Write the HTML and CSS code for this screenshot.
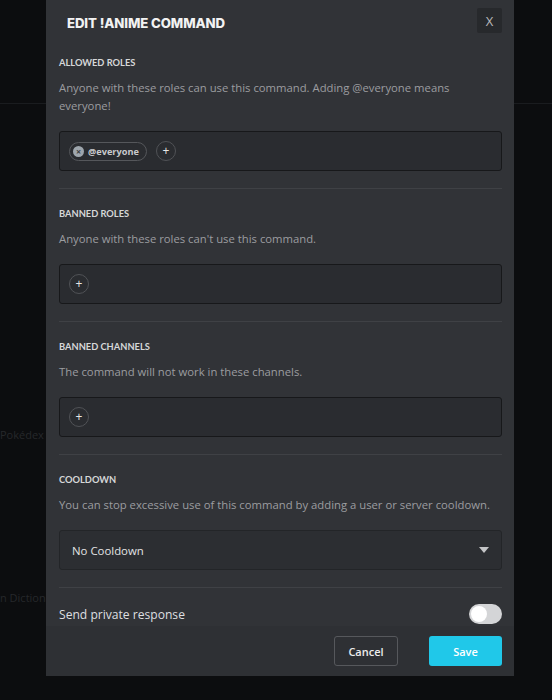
FILE: index.html
```html
<!DOCTYPE html>
<html lang="en">
<head>
<meta charset="utf-8">
<link rel="stylesheet" href="styles.css">
</head>
<body>
<div class="page">
  <div class="bg-line"></div>
  <div class="bg-text bg-text-1">Pokédex</div>
  <div class="bg-text bg-text-2">n Dictionary</div>

  <div class="modal">
    <div class="modal-header">
      <h1 class="modal-title">EDIT !ANIME COMMAND</h1>
      <button class="close-btn">X</button>
    </div>
    <div class="modal-body">
      <section class="section">
        <div class="label">ALLOWED ROLES</div>
        <p class="desc">Anyone with these roles can use this command. Adding @everyone means everyone!</p>
        <div class="field">
          <span class="chip"><span class="chip-x">×</span>@everyone</span>
          <span class="add">+</span>
        </div>
      </section>
      <section class="section">
        <div class="label">BANNED ROLES</div>
        <p class="desc">Anyone with these roles can't use this command.</p>
        <div class="field"><span class="add">+</span></div>
      </section>
      <section class="section">
        <div class="label">BANNED CHANNELS</div>
        <p class="desc">The command will not work in these channels.</p>
        <div class="field"><span class="add">+</span></div>
      </section>
      <section class="section">
        <div class="label">COOLDOWN</div>
        <p class="desc">You can stop excessive use of this command by adding a user or server cooldown.</p>
        <div class="select">
          <span>No Cooldown</span>
          <span class="caret"></span>
        </div>
      </section>
      <div class="toggle-row">
        <span>Send private response</span>
        <span class="toggle"><span class="knob"></span></span>
      </div>
    </div>
    <div class="modal-footer">
      <button class="btn btn-cancel">Cancel</button>
      <button class="btn btn-save">Save</button>
    </div>
  </div>
</div>
</body>
</html>
```

FILE: styles.css
```css
* { box-sizing: border-box; }
html, body { margin: 0; padding: 0; }
body {
  background: #0c0d0f;
  width: 552px;
  height: 700px;
  overflow: hidden;
  font-family: "Open Sans", "Noto Sans", sans-serif;
}
.page {
  position: relative;
  width: 552px;
  height: 700px;
}
.bg-line {
  position: absolute;
  left: 0; right: 0; top: 103px;
  height: 1px;
  background: #1a1c1f;
}
.bg-text {
  position: absolute;
  color: #26282b;
  font-size: 11px;
  font-family: "Open Sans", sans-serif;
}
.bg-text-1 { left: 0; top: 427px; }
.bg-text-2 { left: 0; top: 590px; }

.modal {
  position: absolute;
  left: 46px;
  top: 0;
  width: 468px;
  height: 676px;
  background: #313337;
  display: flex;
  flex-direction: column;
}
.modal-header {
  height: 44px;
  display: flex;
  align-items: flex-start;
  justify-content: space-between;
  padding: 8px 12px 0 21px;
}
.modal-title {
  margin: 7px 0 0;
  font-family: "Inter", "Open Sans", sans-serif;
  font-weight: 800;
  font-size: 13.2px;
  color: #f2f2f2;
  letter-spacing: -0.1px;
}
.close-btn {
  width: 25px;
  height: 25px;
  border: none;
  border-radius: 2px;
  background: #27292c;
  color: #b8b9bb;
  font-family: "Open Sans", sans-serif;
  font-size: 13px;
  padding: 0;
}
.modal-body {
  height: 582px;
  overflow: hidden;
  padding: 13px 12px 0 13px;
}
.section {
  border-bottom: 1px solid #3f4145;
  padding-bottom: 17px;
  padding-top: 19px;
}
.section:first-child { padding-top: 0; }
.label {
  font-family: "Lato", "Open Sans", sans-serif;
  font-weight: 700;
  font-size: 9.3px;
  line-height: 12px;
  color: #d6d7d8;
}
.desc {
  margin: 10px 0 0;
  font-size: 11.3px;
  line-height: 18px;
  color: #9c9da0;
}
.field {
  margin-top: 16px;
  height: 40px;
  background: #2a2c30;
  border: 1px solid #17181a;
  border-radius: 3px;
  display: flex;
  align-items: center;
  padding: 0 9px;
  gap: 9px;
}
.chip {
  display: inline-flex;
  align-items: center;
  height: 19px;
  padding: 0 7px 0 3px;
  border: 1px solid #55575b;
  border-radius: 10px;
  font-size: 9.2px;
  font-weight: 700;
  color: #c9cacc;
  gap: 4px;
}
.chip-x {
  width: 11px;
  height: 11px;
  border-radius: 50%;
  background: #9ea6ad;
  color: #3a3d41;
  font-size: 9px;
  line-height: 11px;
  text-align: center;
  font-weight: 700;
}
.add {
  width: 20px;
  height: 20px;
  border-radius: 50%;
  border: 1px solid #505256;
  color: #e6e6e6;
  font-size: 12px;
  line-height: 17px;
  text-align: center;
}
.select {
  margin-top: 16px;
  height: 40px;
  background: #2c2e32;
  border: 1px solid #232528;
  border-radius: 3px;
  display: flex;
  align-items: center;
  justify-content: space-between;
  padding: 0 12px;
  font-size: 11.4px;
  color: #e2e3e4;
}
.caret {
  width: 0; height: 0;
  border-left: 5px solid transparent;
  border-right: 5px solid transparent;
  border-top: 6px solid #c4c5c7;
}
.toggle-row {
  display: flex;
  align-items: center;
  justify-content: space-between;
  padding-top: 16px;
  font-size: 12.1px;
  color: #dedfe0;
}
.toggle {
  width: 33px;
  height: 20px;
  border-radius: 10px;
  background: #d4d5d7;
  padding: 2px;
  display: flex;
}
.knob {
  width: 16px;
  height: 16px;
  border-radius: 50%;
  background: #ffffff;
}
.modal-footer {
  flex: 1;
  display: flex;
  justify-content: flex-end;
  align-items: flex-start;
  padding: 10px 12px 0 0;
  gap: 31px;
  background: #2e3034;
}
.btn {
  height: 30px;
  border-radius: 3px;
  font-family: "Open Sans", sans-serif;
  font-weight: 600;
  font-size: 11px;
  padding: 0;
}
.btn-cancel {
  width: 64px;
  background: transparent;
  border: 1px solid #56585c;
  color: #ececec;
}
.btn-save {
  width: 73px;
  background: #20c8e9;
  border: none;
  color: #ffffff;
}
```
